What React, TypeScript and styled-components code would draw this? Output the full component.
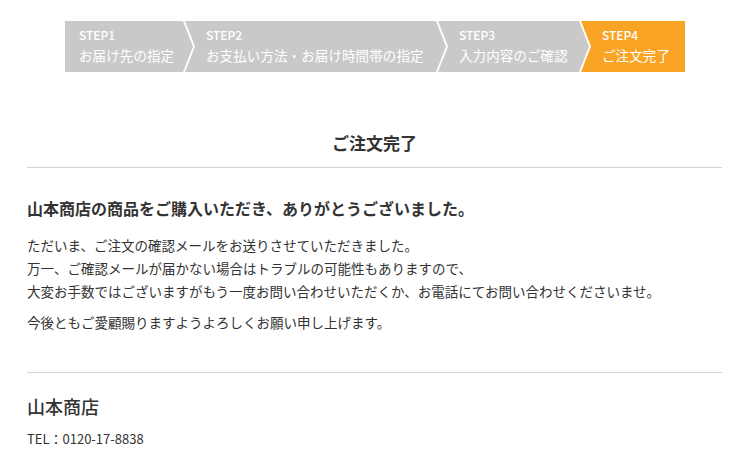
import React from 'react'
import styled, { createGlobalStyle } from 'styled-components'

const GlobalStyle = createGlobalStyle`
  html, body {
    margin: 0;
    padding: 0;
    background: #fff;
  }
  body {
    font-family: "Noto Sans CJK JP", "Noto Sans", sans-serif;
    color: #333;
  }
`

const Page = styled.div`
  width: 750px;
  padding-top: 21px;
`

const StepBar = styled.ol`
  display: flex;
  justify-content: center;
  margin: 0;
  padding: 0;
  list-style: none;
`

const ARROW = 10

const Step = styled.li<{ width: number; first?: boolean; last?: boolean; active?: boolean }>`
  box-sizing: border-box;
  flex: none;
  width: ${({ width }) => width}px;
  height: 51px;
  margin-left: ${({ first }) => (first ? 0 : -8)}px;
  padding: 5px 0 0 ${({ first }) => (first ? 14 : 21)}px;
  background: ${({ active }) => (active ? '#f9a425' : '#c9c9c9')};
  color: #fff;
  clip-path: ${({ first, last }) => {
    const right = last
      ? '100% 0, 100% 100%'
      : `calc(100% - ${ARROW}px) 0, 100% 50%, calc(100% - ${ARROW}px) 100%`
    const left = first ? '0 100%' : `0 100%, ${ARROW}px 50%`
    return `polygon(0 0, ${right}, ${left})`
  }};
`

const StepNo = styled.div`
  font-size: 12px;
  line-height: 18px;
  font-weight: 500;
`

const StepName = styled.div`
  font-size: 13.5px;
  line-height: 22px;
  letter-spacing: 0.1px;
  white-space: nowrap;
`

const Content = styled.main`
  margin: 0 28px 0 27px;
`

const PageTitle = styled.h1`
  margin: 59px 0 0;
  padding-bottom: 12px;
  border-bottom: 1px solid #d4d4d4;
  font-size: 17px;
  line-height: 24px;
  font-weight: 700;
  text-align: center;
  color: #333;
`

const Thanks = styled.h2`
  margin: 28px 0 0;
  font-size: 16px;
  line-height: 24px;
  font-weight: 700;
`

const Text = styled.p<{ gap: number }>`
  margin: ${({ gap }) => gap}px 0 0;
  font-size: 13.5px;
  line-height: 23px;
`

const ShopInfo = styled.section`
  margin-top: 38px;
  border-top: 1px solid #d4d4d4;
`

const ShopName = styled.h3`
  margin: 20px 0 0;
  font-size: 18px;
  line-height: 26px;
  font-weight: 500;
`

const Tel = styled.p`
  margin: 10px 0 0;
  font-size: 13px;
  line-height: 20px;
`

const steps = [
  { no: 'STEP1', name: 'お届け先の指定', width: 128 },
  { no: 'STEP2', name: 'お支払い方法・お届け時間帯の指定', width: 261 },
  { no: 'STEP3', name: '入力内容のご確認', width: 151 },
  { no: 'STEP4', name: 'ご注文完了', width: 104 },
]

export default function App() {
  return (
    <Page>
      <GlobalStyle />
      <StepBar>
        {steps.map((s, i) => (
          <Step
            key={s.no}
            width={s.width}
            first={i === 0}
            last={i === steps.length - 1}
            active={i === steps.length - 1}
          >
            <StepNo>{s.no}</StepNo>
            <StepName>{s.name}</StepName>
          </Step>
        ))}
      </StepBar>
      <Content>
        <PageTitle>ご注文完了</PageTitle>
        <Thanks>山本商店の商品をご購入いただき、ありがとうございました。</Thanks>
        <Text gap={14}>
          ただいま、ご注文の確認メールをお送りさせていただきました。
          <br />
          万一、ご確認メールが届かない場合はトラブルの可能性もありますので、
          <br />
          大変お手数ではございますがもう一度お問い合わせいただくか、お電話にてお問い合わせくださいませ。
        </Text>
        <Text gap={8}>今後ともご愛顧賜りますようよろしくお願い申し上げます。</Text>
        <ShopInfo>
          <ShopName>山本商店</ShopName>
          <Tel>TEL：0120-17-8838</Tel>
        </ShopInfo>
      </Content>
    </Page>
  )
}
